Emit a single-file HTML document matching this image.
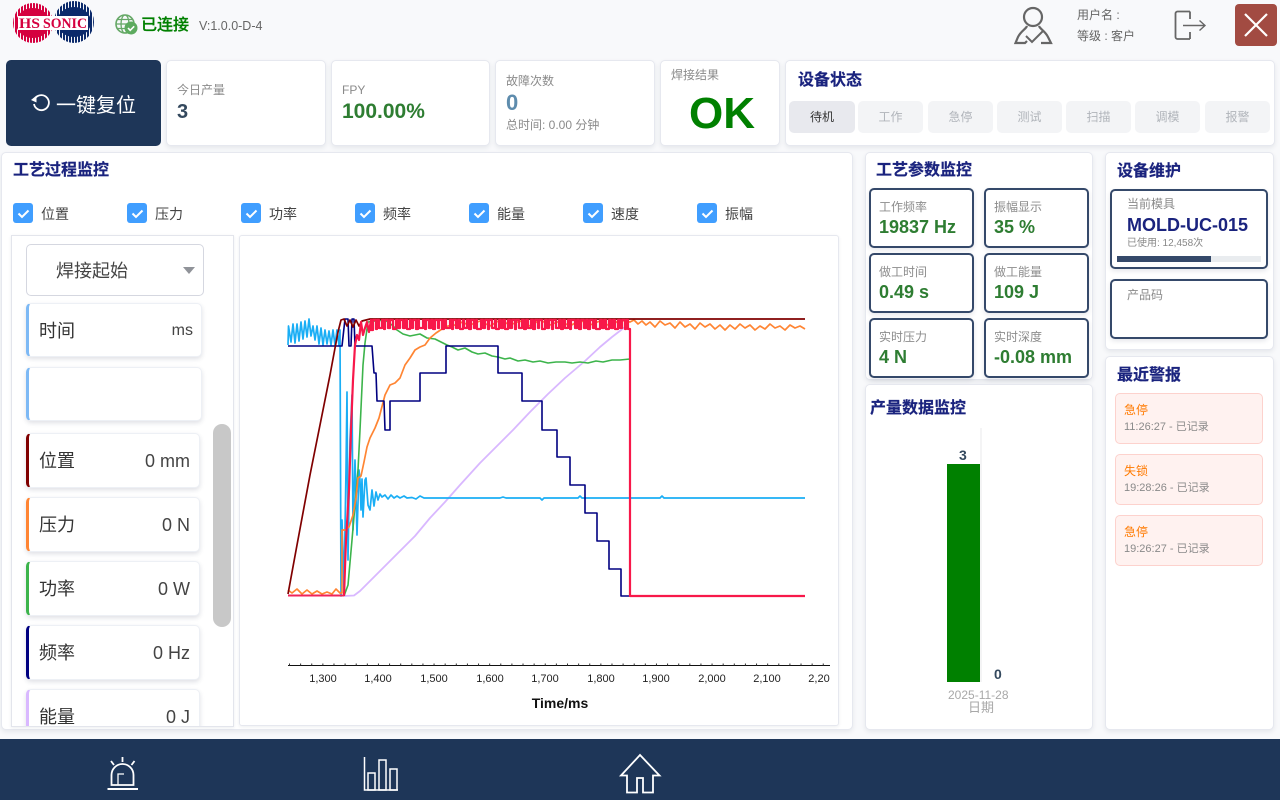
<!DOCTYPE html>
<html lang="zh"><head><meta charset="utf-8"><title>HS SONIC</title>
<style>
*{box-sizing:border-box;margin:0;padding:0}
html,body{width:1280px;height:800px;overflow:hidden;background:#f8f9fb;font-family:"Liberation Sans","Noto Sans CJK SC",sans-serif;color:#333}
div,span,svg{position:absolute}
.t{white-space:nowrap;line-height:20px}
.card{background:#fff;border:1px solid #e6e8ef;border-radius:5px;box-shadow:0 2px 5px rgba(40,50,80,.09)}
.h{font-size:16px;font-weight:700;color:#1a237e;white-space:nowrap;line-height:20px;-webkit-text-stroke:.2px #1a237e}
.g{color:#8a8a8a;font-size:12px}
.st{top:101px;height:32px;background:#f3f4f6;border-radius:5px;color:#b0b4ba;font-size:12px;text-align:center;line-height:32px}
.cb{top:203px;width:20px;height:20px;background:#409eff;border-radius:3px}
.cl{top:204px;font-size:14px;color:#444;line-height:20px;white-space:nowrap}
.m{background:#fff;border:1px solid #edf0f5;border-left:3px solid #7db9f5;border-radius:5px;box-shadow:0 2px 5px rgba(40,50,80,.15);left:26px}
.n{font-size:18px;color:#333;line-height:24px;white-space:nowrap;left:10px;top:15px}
.u{font-size:18px;color:#444;line-height:24px;white-space:nowrap;right:9px;top:15px}
.p{width:105px;height:60px;background:#fff;border:2px solid #35496a;border-radius:5px;box-shadow:0 2px 5px rgba(40,50,80,.12)}
.p .a{left:8px;top:7px;font-size:12px;color:#8c8c8c;line-height:20px;white-space:nowrap}
.p .b{left:8px;top:26px;font-size:18px;font-weight:700;color:#2e7d32;line-height:22px;white-space:nowrap}
.al{left:1115px;width:148px;height:51px;background:#fff2f0;border:1px solid #fdd2cd;border-radius:5px}
.al .a{left:8px;top:7px;font-size:12px;color:#ff7a00;line-height:18px;white-space:nowrap}
.al .b{left:8px;top:24px;font-size:11px;color:#8a8a8a;line-height:18px;white-space:nowrap}
</style></head><body>

<!-- logo -->
<svg style="left:12px;top:1px" width="84" height="44" viewBox="0 0 84 44">
<defs>
<pattern id="pr" width="3" height="44" patternUnits="userSpaceOnUse"><rect width="2" height="44" fill="#d5003f"/></pattern>
<pattern id="pb" width="3" height="44" patternUnits="userSpaceOnUse"><rect width="2" height="44" fill="#0b2a6b"/></pattern>
</defs>
<ellipse cx="21" cy="22" rx="20" ry="20" fill="url(#pr)"/>
<ellipse cx="62" cy="21" rx="20" ry="21" fill="url(#pb)"/>
<ellipse cx="21" cy="22" rx="17" ry="15" fill="#d5003f"/>
<ellipse cx="62" cy="21" rx="17" ry="15" fill="#0b2a6b"/>
<rect x="6" y="15" width="70" height="14" fill="#fff"/>
<text x="7" y="27" font-family="Liberation Serif" font-weight="700" font-size="14.5" fill="#d5003f" textLength="21" lengthAdjust="spacingAndGlyphs">HS</text>
<text x="31" y="27" font-family="Liberation Serif" font-weight="700" font-size="14.5" fill="#d5003f" textLength="44" lengthAdjust="spacingAndGlyphs">SONIC</text>
</svg>

<!-- connection -->
<svg style="left:115px;top:14px" width="24" height="22" viewBox="0 0 24 22">
<circle cx="10" cy="10" r="9" fill="none" stroke="#66a867" stroke-width="1.6"/>
<ellipse cx="10" cy="10" rx="4" ry="9" fill="none" stroke="#66a867" stroke-width="1.3"/>
<path d="M1 10H19M2.500 5.500H17.500M2.500 14.500H17.500" stroke="#66a867" stroke-width="1.2"/>
<circle cx="16" cy="14" r="6.500" fill="#5dab5f"/><path d="M13 14l2.200 2.300 4-4" fill="none" stroke="#fff" stroke-width="1.600"/>
</svg>
<div class="t" style="left:141px;top:16px;font-size:16px;font-weight:500;color:#008000;-webkit-text-stroke:.3px #008000">已连接</div>
<div class="t" style="left:199px;top:16px;font-size:12.500px;color:#666">V:1.0.0-D-4</div>

<!-- user -->
<svg style="left:1012px;top:5px" width="42" height="40" viewBox="0 0 42 40" fill="none" stroke="#666" stroke-width="2.200">
<circle cx="21" cy="12" r="9"/>
<path d="M15 21C14 24 9 26 6 32L3.500 38H13L15 36"/><path d="M27 21C28 24 33 26 36 32L39 38H29"/>
<path d="M14 31L20 37L31 26" stroke-width="2"/>
</svg>
<div class="t" style="left:1077px;top:5px;font-size:12px;color:#666">用户名 :</div>
<div class="t" style="left:1077px;top:26px;font-size:12px;color:#666">等级 : 客户</div>
<svg style="left:1174px;top:9px" width="34" height="32" viewBox="0 0 34 32" fill="none" stroke="#666" stroke-width="1.800">
<path d="M16 2.500H3.500A2 2 0 0 0 1.500 4.500V28A2 2 0 0 0 3.500 30H16"/><path d="M16 2.500V10M16 23V30" />
<path d="M9 16.500H30M25.500 11.500L31 16.500L25.500 21.500" stroke-width="1.400"/>
</svg>
<div style="left:1235px;top:4px;width:42px;height:42px;background:#a24b42;border-radius:4px"></div>
<svg style="left:1235px;top:4px" width="42" height="42"><path d="M10 10L32 32M32 10L10 32" stroke="#fff" stroke-width="2.200"/></svg>

<!-- top row -->
<div style="left:6px;top:60px;width:155px;height:86px;background:#1e3658;border-radius:5px"></div>
<svg style="left:30px;top:94px" width="22" height="20" viewBox="0 0 22 20" fill="none" stroke="#fff" stroke-width="1.800">
<path d="M5.500 4A7.500 7.500 0 1 1 4 10"/><path d="M1 6L6.500 8.500V1.500Z" fill="#fff" stroke="none"/>
</svg>
<div class="t" style="left:56px;top:94px;font-size:20px;line-height:24px;color:#fff">一键复位</div>

<div class="card" style="left:166px;top:60px;width:160px;height:86px"></div>
<div class="t g" style="left:177px;top:80px">今日产量</div>
<div class="t" style="left:177px;top:102px;font-size:20px;font-weight:700;color:#34495e">3</div>

<div class="card" style="left:331px;top:60px;width:159px;height:86px"></div>
<div class="t g" style="left:342px;top:80px">FPY</div>
<div class="t" style="left:342px;top:102px;font-size:21px;font-weight:700;color:#2e7d32">100.00%</div>

<div class="card" style="left:495px;top:60px;width:160px;height:86px"></div>
<div class="t g" style="left:506px;top:71px">故障次数</div>
<div class="t" style="left:506px;top:93px;font-size:22px;font-weight:700;color:#5e8cad">0</div>
<div class="t g" style="left:506px;top:115px">总时间: 0.00 分钟</div>

<div class="card" style="left:660px;top:60px;width:120px;height:86px"></div>
<div class="t g" style="left:671px;top:65px">焊接结果</div>
<div class="t" style="left:689px;top:90px;font-size:44px;line-height:48px;font-weight:700;color:#008000">OK</div>

<div class="card" style="left:785px;top:60px;width:490px;height:86px"></div>
<div class="h" style="left:798px;top:71px">设备状态</div>
<div class="st" style="left:789px;width:66px;background:#e8e9ee;color:#333">待机</div>
<div class="st" style="left:858px;width:65px">工作</div>
<div class="st" style="left:928px;width:65px">急停</div>
<div class="st" style="left:997px;width:65px">测试</div>
<div class="st" style="left:1066px;width:65px">扫描</div>
<div class="st" style="left:1135px;width:65px">调模</div>
<div class="st" style="left:1205px;width:65px">报警</div>

<!-- main panel -->
<div class="card" style="left:1px;top:152px;width:852px;height:578px"></div>
<div class="h" style="left:13px;top:161px">工艺过程监控</div>

<div class="cb" style="left:13px"></div><div class="cl" style="left:41px">位置</div>
<div class="cb" style="left:127px"></div><div class="cl" style="left:155px">压力</div>
<div class="cb" style="left:241px"></div><div class="cl" style="left:269px">功率</div>
<div class="cb" style="left:355px"></div><div class="cl" style="left:383px">频率</div>
<div class="cb" style="left:469px"></div><div class="cl" style="left:497px">能量</div>
<div class="cb" style="left:583px"></div><div class="cl" style="left:611px">速度</div>
<div class="cb" style="left:697px"></div><div class="cl" style="left:725px">振幅</div>
<svg style="left:0;top:195px" width="720" height="36" fill="none" stroke="#fff" stroke-width="2">
<path d="M18.500 18.500l3.500 3.500 6.500-6.500M132.500 18.500l3.500 3.500 6.500-6.500M246.500 18.500l3.500 3.500 6.500-6.500M360.500 18.500l3.500 3.500 6.500-6.500M474.500 18.500l3.500 3.500 6.500-6.500M588.500 18.500l3.500 3.500 6.500-6.500M702.500 18.500l3.500 3.500 6.500-6.500"/>
</svg>

<!-- left list -->
<div style="left:11px;top:235px;width:223px;height:492px;background:#fff;border:1px solid #e3e5ec;overflow:hidden;box-shadow:0 1px 3px rgba(40,50,80,.08)">
 <div style="left:14px;top:8px;width:178px;height:52px;background:#fff;border:1px solid #d5d7e0;border-radius:5px">
  <div class="t" style="left:29px;top:14px;font-size:18px;line-height:24px;color:#444">焊接起始</div>
  <div style="left:156px;top:22px;width:0;height:0;border-left:6px solid transparent;border-right:6px solid transparent;border-top:7px solid #909399"></div>
 </div>
 <div class="m" style="left:14px;top:67px;width:176px;height:54px"><div class="n" style="left:10px">时间</div><div class="u" style="font-size:16px;right:8px">ms</div></div>
 <div class="m" style="left:14px;top:131px;width:176px;height:54px"></div>
 <div class="m" style="left:14px;top:197px;width:174px;height:55px;border-left-color:#800000"><div class="n">位置</div><div class="u">0 mm</div></div>
 <div class="m" style="left:14px;top:261px;width:174px;height:55px;border-left-color:#ff8533"><div class="n">压力</div><div class="u">0 N</div></div>
 <div class="m" style="left:14px;top:325px;width:174px;height:55px;border-left-color:#3cb44b"><div class="n">功率</div><div class="u">0 W</div></div>
 <div class="m" style="left:14px;top:389px;width:174px;height:55px;border-left-color:#000080"><div class="n">频率</div><div class="u">0 Hz</div></div>
 <div class="m" style="left:14px;top:453px;width:174px;height:55px;border-left-color:#d9b8ff"><div class="n">能量</div><div class="u">0 J</div></div>
 <div style="left:201px;top:188px;width:18px;height:203px;background:#c8c8c8;border-radius:9px"></div>
</div>

<!-- chart -->
<div style="left:239px;top:235px;width:600px;height:491px;background:#fff;border:1px solid #e6e8ef;border-radius:3px;box-shadow:0 1px 3px rgba(40,50,80,.08)"></div>
<svg style="left:240px;top:235px" width="598" height="491" viewBox="240 235 598 491" fill="none" stroke-linejoin="round">
<!-- axis -->
<path d="M288 665.500H830" stroke="#111"/>
<path d="M289 664.500H830" stroke="#333" stroke-width="2" stroke-dasharray="1 10.120"/>
<g font-family="Liberation Sans" font-size="11" fill="#222" text-anchor="middle" stroke="none">
<text x="323" y="682">1,300</text><text x="378" y="682">1,400</text><text x="434" y="682">1,500</text><text x="490" y="682">1,600</text><text x="545" y="682">1,700</text><text x="601" y="682">1,800</text><text x="656" y="682">1,900</text><text x="712" y="682">2,000</text><text x="767" y="682">2,100</text><text x="819" y="682">2,20</text>
<text x="560" y="708" font-size="14" font-weight="700" fill="#111">Time/ms</text>
</g>
<!-- lavender -->
<path d="M344 596L354 595.500L360 591L370 581L385 566L400 551L415 536L430 518L445 502L460 485L480 463L495 448L513 430L530 412L548 394L565 378L585 361L600 347L612 337L625 327" stroke="#d9b8ff" stroke-width="1.800"/>
<!-- cyan -->
<path d="M288 345L288.500 326L291 342L293 324L295 343L297 324L299 341L301 322L303 339L305 321L307 337L309 319L311 336L313 326L315 340L317 326L319 344L321 328L323 345L325 330L327 344L329 331L331 345L333 330L335 345L337 330L339 345L340 330L341 596L342 520L344 590L346 470L347 392L348 560L350 440L352 395L353 530L355 460L357 535L359 470L360 480L361 510L362 479L363 517L365 480L366 478L368 505L370 510L372 490L374 506L376 492L378 500L380 494L382 497L385 495L388 499L391 495L394 498L397 496L400 498L404 496L407 498L412 497.500L416 499L420 496L424 498L500 498L503 497L506 498L540 498L542 500L544 498L578 498L580 496L582 498L640 498L660 498L662 496L664 498L700 498L805 498" stroke="#1aaef5" stroke-width="1.700"/>
<!-- green -->
<path d="M344 596L348 585L352 540L355 505L358 470L360 430L363 365L365 343L368 322L375 321L385 320L392 325L397 330L403 334L410 336L415 335L420 334L427 338L435 339L441 342L447 345L452 347L458 350L465 348L472 352L478 354L485 353L492 356L498 357L505 359L510 358L518 361L525 360L533 362L540 361L548 363L556 362L565 362L572 363L580 362L588 363L596 361L603 362L612 360L620 360L630 359" stroke="#3cb44b" stroke-width="1.600"/>
<path d="M630 359V420" stroke="#3cb44b" stroke-width="1.600"/><path d="M630 420V596" stroke="#3cb44b" stroke-width=".8"/>
<!-- orange -->
<path d="M288 590L292 593L297 589L302 594L307 590L312 594L317 591L322 594L327 592L332 594L336 589L340 593L342 593L342 530L345 530L349 527L353 515L356 498L358 478L361 476L364 462L367 447L370 438L375 428L379 418L385 395L390 385L395 383L400 378L405 365L410 358L415 350L420 347L425 345L430 338L436 333L442 329L448 326L455 325L460 322L470 325L480 321L490 326L500 320L510 325L520 321L530 326L540 320L550 325L560 321L570 326L580 320L590 325L600 321L610 326L620 320L630 322L634 320L638 324L642 321L646 325L650 322L655 327L660 321L665 325L670 323L675 328L680 322L685 327L690 324L695 329L700 323L705 327L710 324L715 329L720 325L725 330L730 325L735 329L740 324L745 328L750 325L755 330L760 326L765 329L770 324L775 328L780 326L785 330L790 325L795 328L800 326L805 329" stroke="#ff8533" stroke-width="1.700"/>
<!-- navy -->
<path d="M288 346H342V346L345 319L348 319L349 346H351L352 319H354L355 346H372L374 373H376L377 401H384L385 430H390V401H420V373H446V346H498V373H522V401H542V430H557V457H570V485H585V513H597V541H609V569H621V596H632" stroke="#000080" stroke-width="1.600"/>
<!-- dark red -->
<path d="M288 594L297 545L310 475L320 425L330 375L338 332L341 320L344 319L347 326L350 320L353 327L356 320L359 326L362 321L366 320L370 319H805" stroke="#800000" stroke-width="1.700"/>
<!-- red -->
<path d="M344 596L346 540L349 490L351 430L353 380L355 345L357 335L359 340L361 322L363 335L365 328L367 322L369 332L371 320V330H373V320H376V329H377V320H379V328H382V320H384V329H385V320H388V328H390V320H393V329H396V320H398V328H400V320H403V328H405V320H407V329H410V320H411V328H413V320H416V329H418V320H419V328H423V320H425V329H426V320H429V328H431V320H433V329H435V320H438V328H439V320H442V329H444V320H446V328H450V320H452V329H453V320H456V328H458V320H460V329H463V320H464V328H467V320H469V329H471V320H474V328H476V320H477V329H481V320H483V328H485V320H488V329H489V320H492V328H495V320H496V329H499V320H501V328H503V320H505V329H508V320H510V328H512V320H515V329H516V320H519V328H522V320H524V329H526V320H528V328H531V320H533V329H535V320H538V328H539V320H542V329H545V320H547V328H549V320H552V329H553V320H556V328H559V320H561V329H563V320H565V328H568V320H570V329H571V320H575V328H577V320H579V329H581V320H584V328H586V320H588V329H590V320H593V328H595V320H596V329H600V320H602V328H604V320H606V329H609V320H611V328H613V320H615V329H618V320H620V328H622V320H625V329H626V320H628V329H630V596H805" stroke="#f8184a" stroke-width="2.200"/>
<path d="M288 595.500H344" stroke="#f0245a" stroke-width="1.900"/>
</svg>

<!-- process params -->
<div class="card" style="left:865px;top:152px;width:228px;height:228px"></div>
<div class="h" style="left:876px;top:161px">工艺参数监控</div>
<div class="p" style="left:869px;top:188px"><div class="a">工作频率</div><div class="b">19837 Hz</div></div>
<div class="p" style="left:984px;top:188px"><div class="a">振幅显示</div><div class="b">35 %</div></div>
<div class="p" style="left:869px;top:253px"><div class="a">做工时间</div><div class="b">0.49 s</div></div>
<div class="p" style="left:984px;top:253px"><div class="a">做工能量</div><div class="b">109 J</div></div>
<div class="p" style="left:869px;top:318px"><div class="a">实时压力</div><div class="b">4 N</div></div>
<div class="p" style="left:984px;top:318px"><div class="a">实时深度</div><div class="b">-0.08 mm</div></div>

<!-- production -->
<div class="card" style="left:865px;top:384px;width:228px;height:346px"></div>
<div class="h" style="left:870px;top:399px">产量数据监控</div>
<div style="left:980px;top:428px;width:2px;height:254px;background:#f4f4f5"></div>
<div style="left:947px;top:464px;width:33px;height:218px;background:#008000"></div>
<div class="t" style="left:959px;top:445px;font-size:14px;font-weight:700;color:#34495e">3</div>
<div class="t" style="left:994px;top:664px;font-size:14px;font-weight:700;color:#34495e">0</div>
<div class="t" style="left:948px;top:686px;font-size:12px;line-height:18px;color:#a8a8a8">2025-11-28</div>
<div class="t" style="left:968px;top:699px;font-size:13px;line-height:18px;color:#a8a8a8">日期</div>

<!-- maintenance -->
<div class="card" style="left:1105px;top:152px;width:169px;height:198px"></div>
<div class="h" style="left:1117px;top:162px">设备维护</div>
<div class="p" style="left:1110px;top:189px;width:158px;height:80px"></div>
<div class="t" style="left:1127px;top:194px;font-size:12px;color:#8a8a8a">当前模具</div>
<div class="t" style="left:1127px;top:215px;font-size:18px;font-weight:700;color:#1a237e">MOLD-UC-015</div>
<div class="t" style="left:1127px;top:234px;font-size:10px;color:#888">已使用: 12,458次</div>
<div style="left:1117px;top:256px;width:144px;height:6px;background:#e9ecef"></div>
<div style="left:1117px;top:256px;width:94px;height:6px;background:#35496a"></div>
<div class="p" style="left:1110px;top:279px;width:158px;height:60px"></div>
<div class="t" style="left:1127px;top:285px;font-size:12px;color:#8a8a8a">产品码</div>

<!-- alerts -->
<div class="card" style="left:1105px;top:356px;width:169px;height:374px"></div>
<div class="h" style="left:1117px;top:366px">最近警报</div>
<div class="al" style="top:393px"><div class="a">急停</div><div class="b">11:26:27 - 已记录</div></div>
<div class="al" style="top:454px"><div class="a">失锁</div><div class="b">19:28:26 - 已记录</div></div>
<div class="al" style="top:515px"><div class="a">急停</div><div class="b">19:26:27 - 已记录</div></div>

<!-- bottom bar -->
<div style="left:0;top:739px;width:1280px;height:61px;background:#1e3658"></div>
<svg style="left:100px;top:750px" width="44" height="44" viewBox="100 750 44 44" fill="none" stroke="#fff" stroke-width="1.500">
<path d="M107.500 789H138" stroke-width="2"/>
<path d="M111.500 785V775A11 11 0 0 1 133.500 775V785Z" stroke-width="1.800"/>
<path d="M118 785V774H124" stroke-width="1.300"/>
<path d="M122.500 757V762M111 761L114 765M134.500 761L131.500 765" stroke-width="1.800"/>
</svg>
<svg style="left:360px;top:752px" width="44" height="42" viewBox="360 752 44 42" fill="none" stroke="#fff" stroke-width="1.500">
<path d="M364.500 757V790H398"/>
<rect x="368" y="773" width="7" height="17"/><rect x="379" y="760" width="7" height="30"/><rect x="390" y="769" width="7" height="21"/>
</svg>
<svg style="left:616px;top:750px" width="48" height="46" viewBox="616 750 48 46" fill="none" stroke="#fff" stroke-width="1.800">
<path d="M640 755L621 775.500H627V792.500H637V778H643V792.500H653V775.500H659.500Z"/>
</svg>
</body></html>
